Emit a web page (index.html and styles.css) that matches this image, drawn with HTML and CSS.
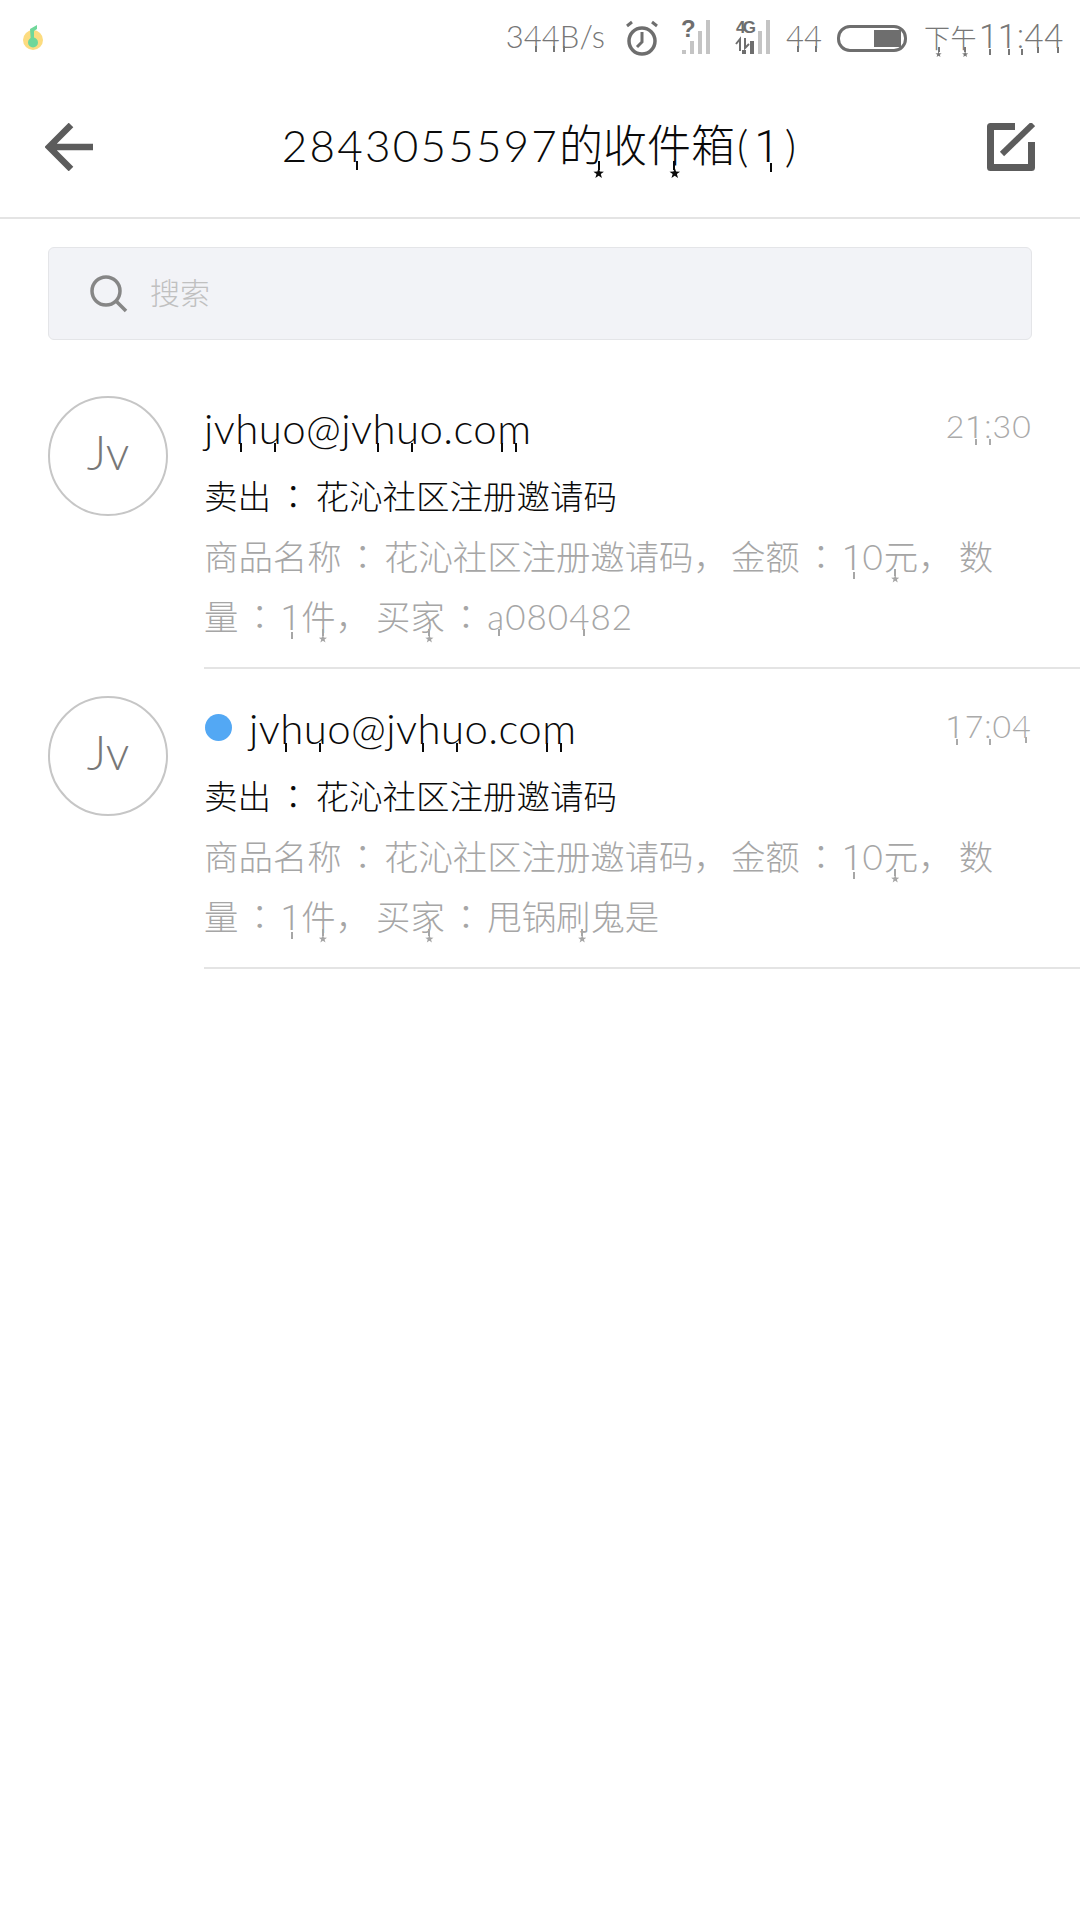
FILE: index.html
```html
<!DOCTYPE html>
<html lang="zh-CN">
<head>
  <meta charset="UTF-8">
  <title>收件箱</title>
  <link rel="stylesheet" href="styles.css">
</head>
<body>
  <div class="statusbar">
    <svg class="app-icon" width="28" height="28" viewBox="0 0 28 28">
      <circle cx="13" cy="16" r="10" fill="#fcdc80"/>
      <circle cx="13" cy="18.5" r="5" fill="#6fd79a"/>
      <path d="M10 5l7-4v4l-3 2v12h-3z" fill="#6fd79a"/>
    </svg>
    <div class="status-right">
      <span class="speed">3<b class="dn dn-r">4</b><b class="dn dn-r">4</b><b class="dn dn-l">B</b>/s</span>
      <svg class="ic-alarm" width="33" height="36" viewBox="0 0 33 36" fill="none" stroke="#6e6e6e">
        <circle cx="16" cy="21" r="13" stroke-width="3.5"/>
        <path d="M16 12v10l-5 5" stroke-width="3"/>
        <path d="M1 6l5-4M31 6l-5-4" stroke-width="3"/>
      </svg>
      <svg class="ic-sim" width="30" height="52" viewBox="0 -8 30 52">
        <text x="0" y="17" class="net-mark">?</text>
        <rect x="1" y="30" width="4" height="4" fill="#c4c4c4"/>
        <rect x="9" y="21" width="4" height="13" fill="#c4c4c4"/>
        <rect x="17" y="11" width="4" height="23" fill="#c4c4c4"/>
        <rect x="25" y="0" width="4" height="34" fill="#c4c4c4"/>
      </svg>
      <svg class="ic-4g" width="36" height="52" viewBox="0 -8 36 52">
        <text x="1" y="13" class="net-label" textLength="20">4G</text>
        <path d="M5 31V19l-4 5M10 18v10l4-4" fill="none" stroke="#6e6e6e" stroke-width="2"/>
        <rect x="7" y="30" width="4" height="4" fill="#6e6e6e"/>
        <rect x="15" y="21" width="4" height="13" fill="#6e6e6e"/>
        <rect x="23" y="11" width="4" height="23" fill="#c4c4c4"/>
        <rect x="31" y="0" width="4" height="34" fill="#c4c4c4"/>
      </svg>
      <span class="speed level"><b class="dn dn-r">4</b><b class="dn dn-r">4</b></span>
      <div class="battery"><div class="battery-fill"></div></div>
      <span class="clock"><span class="clock-cn"><b class="st st-c">下</b><b class="st st-c">午</b></span><b class="dn dn-c">1</b><b class="dn dn-c">1</b><b class="dn dn-c">:</b><b class="dn dn-r">4</b><b class="dn dn-r">4</b></span>
    </div>
  </div>

  <header class="titlebar">
    <svg width="48" height="48" viewBox="0 0 48 48" fill="none" stroke="#5c5c5c" stroke-width="6.5">
      <path d="M48 24H4M26 2L4 24l22 22"/>
    </svg>
    <h1><span class="num">28<b class="dn dn-r">4</b>3055597</span><b class="st st-r">的</b>收<b class="st st-k">件</b>箱<span class="paren">(<b class="dn dn-c">1</b>)</span></h1>
    <svg width="48" height="48" viewBox="0 0 48 48" fill="none" stroke="#5c5c5c" stroke-linejoin="round">
      <path d="M28 3.5H3.5v41h41V19" stroke-width="7"/>
      <path d="M15 31L46 1" stroke-width="6"/>
    </svg>
  </header>

  <div class="search">
    <svg width="38" height="38" viewBox="0 0 38 38" fill="none" stroke="#868686" stroke-width="3.5">
      <circle cx="16" cy="16" r="14"/>
      <path d="M26 26l10 10"/>
    </svg>
    <span>搜索</span>
  </div>

  <ul class="mail-list">
    <li class="mail">
      <div class="avatar">Jv</div>
      <div class="mail-body">
        <div class="mail-top">
          <span class="from">
            <span>jv<b class="dn dn-l">h</b><b class="dn dn-r">u</b>o@jv<b class="dn dn-l">h</b><b class="dn dn-r">u</b>o.co<b class="dn dn-m">m</b></span>
          </span>
          <span class="time">2<b class="dn dn-c">1</b><b class="dn dn-c">:</b>30</span>
        </div>
        <div class="subject">卖出<span class="sep" lang="zh-TW">：</span>花沁社区注册邀请码</div>
        <div class="desc">商品名称<span class="sep" lang="zh-TW">：</span>花沁社区注册邀请码<span class="comma">，</span>金额<span class="sep" lang="zh-TW">：</span><span class="num"><b class="dn dn-c">1</b>0</span><b class="st st-l">元</b><span class="comma">，</span><span>数</span><span>量</span><span class="sep" lang="zh-TW">：</span><span class="num"><b class="dn dn-c">1</b></span><b class="st st-k">件</b><span class="comma">，</span>买<b class="st st-c">家</b><span class="sep" lang="zh-TW">：</span><span class="num"><b class="dn dn-r">a</b>080<b class="dn dn-r">4</b>82</span></div>
      </div>
    </li>
    <li class="mail">
      <div class="avatar">Jv</div>
      <div class="mail-body">
        <div class="mail-top">
          <span class="from">
            <i class="unread"></i>
            <span>jv<b class="dn dn-l">h</b><b class="dn dn-r">u</b>o@jv<b class="dn dn-l">h</b><b class="dn dn-r">u</b>o.co<b class="dn dn-m">m</b></span>
          </span>
          <span class="time"><b class="dn dn-c">1</b>7<b class="dn dn-c">:</b>0<b class="dn dn-r">4</b></span>
        </div>
        <div class="subject">卖出<span class="sep" lang="zh-TW">：</span>花沁社区注册邀请码</div>
        <div class="desc">商品名称<span class="sep" lang="zh-TW">：</span>花沁社区注册邀请码<span class="comma">，</span>金额<span class="sep" lang="zh-TW">：</span><span class="num"><b class="dn dn-c">1</b>0</span><b class="st st-l">元</b><span class="comma">，</span><span>数</span><span>量</span><span class="sep" lang="zh-TW">：</span><span class="num"><b class="dn dn-c">1</b></span><b class="st st-k">件</b><span class="comma">，</span>买<b class="st st-c">家</b><span class="sep" lang="zh-TW">：</span>甩锅<b class="st st-r">刷</b>鬼是</div>
      </div>
    </li>
  </ul>
</body>
</html>
```

FILE: styles.css
```css
* {
  box-sizing: border-box;
}
body {
  margin: 0;
  width: 1080px;
  height: 1920px;
  background: #fff;
  font-family: "Lato", "Noto Sans CJK SC", sans-serif;
  font-weight: 300;
  overflow: hidden;
}
b {
  font-weight: inherit;
}

/* the screenshot's font drops some stems below the baseline, a few end in a star */
.dn,
.st {
  position: relative;
}
.dn::after,
.st::after,
.dn-m::before {
  content: "";
  position: absolute;
  width: 2px;
  background: currentColor;
}
.dn::after,
.dn-m::before {
  top: .96em;
  height: .2em;
}
.st::after {
  top: .96em;
  height: .2em;
}
.dn-l::after {
  left: .11em;
}
/* the 1 and the colon have no foot in the screenshot, Lato's 1 does */
.dn-c {
  font-family: "Roboto", sans-serif;
}
.dn-c::after {
  left: 52%;
}
.dn-r::after {
  right: .15em;
}
.dn-m::before {
  left: .1em;
}
.dn-m::after {
  left: .42em;
}
.st::before {
  content: "";
  position: absolute;
  top: 1.12em;
  width: .24em;
  height: .24em;
  margin-left: -.11em;
  background: currentColor;
  clip-path: polygon(50% 0, 62% 36%, 100% 38%, 70% 60%, 81% 96%, 50% 75%, 19% 96%, 30% 60%, 0 38%, 38% 36%);
}
.st-l::after {
  left: 30%;
}
.st-l::before {
  left: 32%;
}
.st-c::after {
  left: 52%;
}
.st-c::before {
  left: 54%;
}
.st-k::after {
  left: 60%;
}
.st-k::before {
  left: 62%;
}
.st-r::after {
  right: .08em;
}
.st-r::before {
  right: .08em;
  margin: 0 -.1em 0 0;
}

.statusbar {
  height: 76px;
  display: flex;
  align-items: center;
  justify-content: space-between;
  padding: 0 16px 0 20px;
}
.status-right {
  display: flex;
  align-items: center;
  color: #777;
}
.ic-alarm {
  margin-left: 21px;
}
.ic-sim {
  margin-left: 22px;
}
.ic-4g {
  margin-left: 24px;
}
.speed {
  font-size: 31px;
  margin-bottom: 5px;
}
.level {
  margin-left: 15px;
}
.net-mark {
  font: bold 24px "Liberation Sans", sans-serif;
  fill: #6e6e6e;
}
.net-label {
  font: bold 17px "Liberation Sans", sans-serif;
  fill: #6e6e6e;
}
.battery {
  width: 70px;
  height: 27px;
  margin-left: 15px;
  border: 3px solid #6e6e6e;
  border-radius: 13px;
  display: flex;
  justify-content: flex-end;
  padding: 2px 3px;
}
.battery-fill {
  width: 27px;
  background: #6e6e6e;
}
.clock {
  font-size: 33px;
  letter-spacing: .6px;
  margin: 0 0 5px 17px;
}
.clock-cn {
  font-size: 26px;
  margin-right: 2px;
}

.titlebar {
  height: 143px;
  display: flex;
  align-items: center;
  justify-content: space-between;
  padding: 0 45px;
  border-bottom: 2px solid #e4e4e4;
}
.titlebar h1 {
  margin: 0 0 8px 4px;
  font-size: 44px;
  font-weight: 300;
  color: #0a0a0a;
}
.titlebar .num {
  letter-spacing: 2.2px;
}
.paren {
  letter-spacing: 6px;
  margin-left: 2px;
}

.search {
  height: 93px;
  margin: 28px 48px 0;
  padding-left: 41px;
  display: flex;
  align-items: center;
  gap: 22px;
  background: #f2f3f7;
  border: 1px solid #e4e5e8;
  border-radius: 6px;
  font-size: 30px;
  color: #c0c0c0;
}
.search span {
  margin-bottom: 6px;
}

.mail-list {
  list-style: none;
  margin: 28px 0 0;
  padding: 0;
}
.mail {
  display: flex;
  height: 301px;
  padding: 28px 0 0 48px;
}
.mail + .mail {
  height: 300px;
  padding-top: 27px;
}
.avatar {
  width: 120px;
  height: 120px;
  flex: none;
  border: 2.5px solid #c6c6c6;
  border-radius: 50%;
  padding-bottom: 8px;
  display: flex;
  align-items: center;
  justify-content: center;
  font-size: 47px;
  color: #777;
}
.mail-body {
  flex: 1;
  margin-left: 36px;
  border-bottom: 2px solid #e4e4e4;
}
.mail-top {
  display: flex;
  justify-content: space-between;
  align-items: center;
  height: 60px;
  margin-top: 2px;
  padding-right: 48px;
}
.from {
  display: flex;
  align-items: center;
  font-size: 42px;
  letter-spacing: .4px;
  color: #0a0a0a;
}
.unread {
  width: 27px;
  height: 27px;
  margin: 0 17px 1px 1px;
  border-radius: 50%;
  background: #53a8f4;
}
.time {
  font-size: 32px;
  letter-spacing: 1.2px;
  margin-bottom: 4px;
  color: #aaa;
}
.subject {
  font-size: 33.5px;
  line-height: 60px;
  margin-top: 8px;
  color: #0a0a0a;
}
.subject .sep {
  margin: 0 5.5px;
}
.desc {
  font-size: 34.4px;
  line-height: 60px;
  color: #a6a6a6;
  padding-right: 80px;
  margin-top: 1px;
}
.desc .num,
.desc .dn {
  line-height: 1;
}
.desc .num {
  font-size: 35px;
  letter-spacing: 1px;
}
.desc .st-r::after,
.desc .st-r::before {
  right: .22em;
}
.sep {
  font-family: "Noto Sans CJK TC", sans-serif;
  line-height: 1;
  margin: 0 4px;
}
.comma {
  margin-right: 3px;
}
.desc .st + .comma {
  margin-right: 6px;
}
```
